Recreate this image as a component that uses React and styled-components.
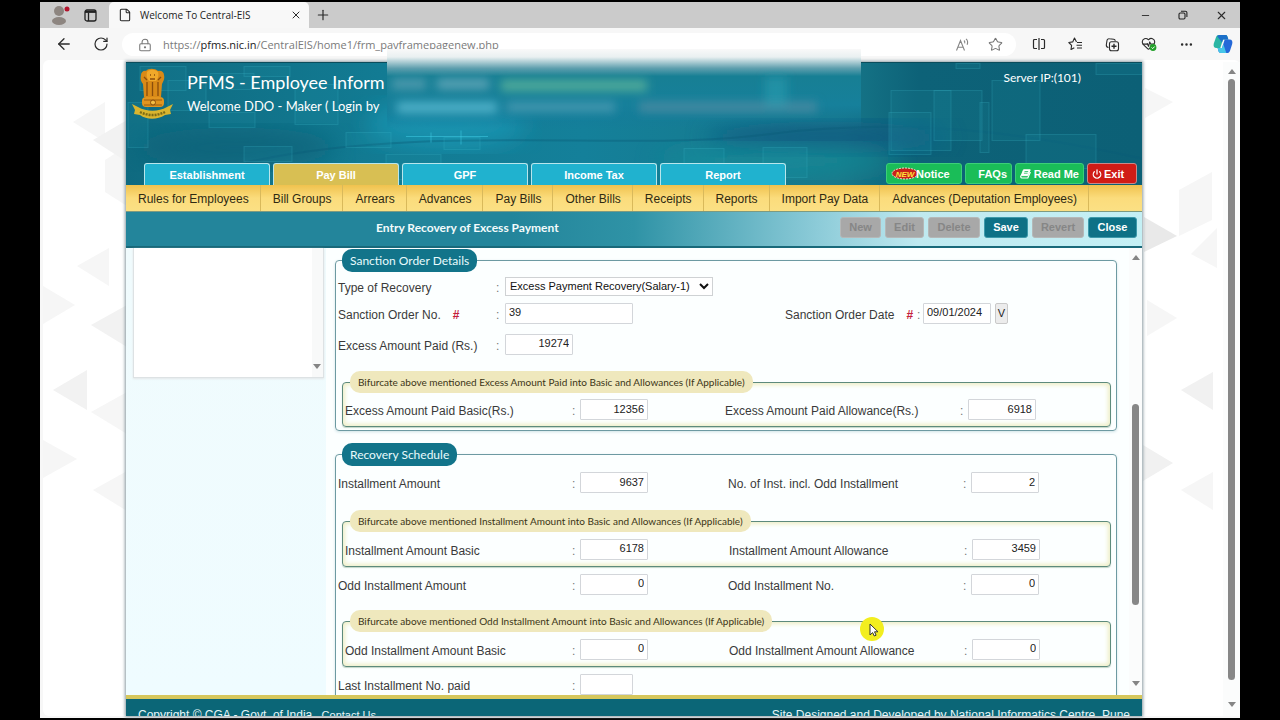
import React from "react";
import styled, { createGlobalStyle } from "styled-components";
import { ArrowLeft, RotateCw, LockKeyhole, Star, File, X, Plus, Minus, HeartPulse, Ellipsis, Power } from "lucide-react";

const GlobalStyle = createGlobalStyle`
  * {
    box-sizing: border-box;
  }
  body {
    margin: 0;
    background: #000;
    font-family: "Liberation Sans", Arial, sans-serif;
    font-size: 12px;
    color: #3a3a3a;
  }
  a {
    text-decoration: none;
    color: inherit;
  }
  button {
    font-family: inherit;
    cursor: pointer;
  }
`

const Screen = styled.div`
  height: 100vh;
  padding: 2px 40px;
  display: flex;
  flex-direction: column;
`

const BrowserWindow = styled.div`
  position: relative;
  flex: 1;
  min-height: 0;
  display: flex;
  flex-direction: column;
  background: #f7f7f7;
  padding-bottom: 2px;
`

const TabStrip = styled.div`
  height: 26px;
  display: flex;
  align-items: stretch;
  background: #cbcbcb;
`

const IconButton = styled.button`
  width: ${(props) => props.$width || 37}px;
  padding: 0;
  border: 0;
  background: none;
  color: ${(props) => props.$color || "#2b2b2b"};
  display: flex;
  justify-content: center;
  align-items: center;
`

const BrowserTab = styled.div`
  width: 200px;
  padding: 0 6px 0 9px;
  display: flex;
  align-items: center;
  gap: 8px;
  background: #f8f8f8;
  color: #222;
  font-family: "Open Sans", sans-serif;
  font-size: 10px;
  border-radius: 5px 5px 0 0;
`

const TabTitle = styled.span`
  flex: 1;
`

const Spacer = styled.div`
  flex: 1;
`

const Toolbar = styled.div`
  height: 32px;
  padding-left: 5px;
  display: flex;
  align-items: stretch;
`

const AddressBar = styled.div`
  flex: 1;
  margin: 5px 4px 4px 3px;
  padding-left: 4px;
  border-radius: 12px;
  background: #fff;
  display: flex;
  align-items: stretch;
`

const AddressText = styled.a`
  flex: 1;
  display: flex;
  align-items: center;
  font-family: "Open Sans", sans-serif;
  font-size: 11px;
  color: #7a7a7a;

  b {
    font-weight: 400;
    color: #1b1b1b;
  }
`

const Viewport = styled.div`
  flex: 1;
  min-height: 0;
  margin-left: 3px;
  padding: 2px 0 0 2px;
  display: flex;
  position: relative;
  background: #fff;
  border-radius: 6px;
`

const Backdrop = styled.svg`
  position: absolute;
  top: 0;
  ${(props) => props.$side}: ${(props) => (props.$side === "left" ? 0 : 15)}px;
`

const PageArea = styled.div`
  flex: 1;
  min-width: 0;
  display: flex;
  justify-content: center;
`

const Page = styled.div`
  position: relative;
  width: 100%;
  max-width: 1016px;
  display: flex;
  flex-direction: column;
  box-shadow: 0 0 3px 1px #8a9aa0;
  background: #f4feff;
`

const Scrollbar = styled.div`
  width: ${(props) => props.$width}px;
  padding: 7px 0 9px;
  display: flex;
  flex-direction: column;
  align-items: center;
  background: #fbfcfc;
`

const Track = styled.div`
  flex: 1;
  width: 7px;
  margin: 5px 0;
  display: flex;
  flex-direction: column;
`

const TrackGap = styled.div`
  flex: ${(props) => props.$size};
`

const Thumb = styled.div`
  flex: ${(props) => props.$size};
  border-radius: 4px;
  background: #878787;
`

const Arrow = styled.div`
  border-left: 4px solid transparent;
  border-right: 4px solid transparent;
  border-${(props) => (props.$up ? "bottom" : "top")}: 5px solid #858585;
`

const Header = styled.header`
  position: relative;
  height: 123px;
  display: flex;
  flex-direction: column;
  justify-content: space-between;
  border-top: 1px solid #0b4d5c;
  background: linear-gradient(90deg, #0f6a80 0%, #127b93 25%, #14809a 45%, #17788a 70%, #0d6278 78%, #0c6076 100%);
`

const HeaderArt = styled.svg`
  position: absolute;
  top: 0;
  left: 0;
  width: 100%;
  height: 100%;
`

const HeaderTop = styled.div`
  position: relative;
  display: flex;
  padding: 5px 61px 0 5px;
  color: #fff;
  font-family: Lato, sans-serif;
`

const Titles = styled.div`
  flex: 1;
  padding: 3px 0 0 13px;
`

const AppTitle = styled.h1`
  margin: 0;
  font-size: 18px;
  line-height: 22px;
  font-weight: 400;
  white-space: nowrap;
`

const Welcome = styled.p`
  margin: 3px 0 0;
  font-size: 13px;
  line-height: 20px;
`

const Server = styled.span`
  padding-top: 1px;
  font-size: 12px;
  line-height: 18px;
`

const Redacted = styled.svg`
  position: absolute;
  top: -14px;
  left: 261px;
`

const HeaderTabs = styled.nav`
  position: relative;
  display: flex;
  align-items: flex-end;
  gap: 3px;
  padding: 0 5px 0 18px;
`

const HeaderTab = styled.a`
  width: 126px;
  height: 22px;
  display: flex;
  justify-content: center;
  align-items: center;
  color: #fff;
  font-size: 11px;
  font-weight: 700;
  border: 1px solid #b8e6ec;
  border-bottom: 0;
  border-radius: 3px 3px 0 0;
  background: ${(props) => (props.$active ? "#d8bf53" : "#20b2cf")};
`

const QuickButton = styled.button`
  width: ${(props) => props.$width}px;
  height: 21px;
  margin-bottom: 1px;
  padding: 0 4px;
  display: flex;
  align-items: center;
  justify-content: ${(props) => props.$align || "flex-end"};
  gap: 2px;
  color: #fff;
  font-size: 11px;
  font-weight: 700;
  white-space: nowrap;
  border: 1px solid ${(props) => (props.$red ? "#c9898a" : "#3ccf78")};
  border-radius: 3px;
  background: ${(props) => (props.$red ? "#d01c16" : "#1abd58")};
`

const Badge = styled.svg`
  flex-shrink: 0;
  margin-right: -5px;
`

const MenuBar = styled.nav`
  height: 27px;
  display: flex;
  border-bottom: 1px solid #7d9a80;
  background: linear-gradient(#f0c24e, #fbdc7c 50%, #fbe084);
  color: #2f2a12;
`

const MenuItem = styled.a`
  padding: 1px 11px 0 12px;
  display: flex;
  align-items: center;
  white-space: nowrap;
  border-right: 1px solid #d9b95b;
`

const TitleBar = styled.div`
  height: 36px;
  padding: 0 5px 4px 250px;
  display: flex;
  align-items: center;
  gap: 4px;
  border-bottom: 2px solid #19697a;
  background: linear-gradient(90deg, #23859b 0%, #23859b 38%, #2f93a6 50%, #8ccbd8 68%, #bfe9f0 78%, #c4f0f5 100%);
`

const ScreenTitle = styled.h2`
  flex: 1;
  margin: 0;
  color: #f3fbfc;
  font-family: Lato, sans-serif;
  font-size: 12px;
  font-weight: 700;
`

const ActionButton = styled.button`
  width: ${(props) => props.$width}px;
  height: 21px;
  padding: 0;
  font-size: 11px;
  font-weight: 700;
  color: #fff;
  border: 1px solid #3d9aab;
  border-radius: 3px;
  background: #0e7186;

  &:disabled {
    color: #868686;
    border-color: #b5b8b8;
    background: #a8a8a8;
  }
`

const Body = styled.div`
  flex: 1;
  min-height: 0;
  display: flex;
`

const Sidebar = styled.aside`
  width: 200px;
  padding: 0 2px 0 7px;
  background: linear-gradient(#f0fbfd, #effcff);
`

const SideList = styled.div`
  height: 130px;
  padding-bottom: 8px;
  display: flex;
  justify-content: flex-end;
  align-items: flex-end;
  border: 1px solid #dde2e4;
  border-top: 0;
  background: linear-gradient(90deg, #fff 94%, #f8f9f9 94%);
  box-shadow: 0 1px 2px #e3e6e8;

  ${Arrow} {
    margin-right: 2px;
  }
`

const Content = styled.main`
  flex: 1;
  min-width: 0;
  padding: 1px 12px 0 9px;
  overflow: hidden;
  background: #fcffff;
`

const Section = styled.fieldset`
  min-width: 0;
  margin: 0 0 12px;
  padding: 0 2px 3px;
  border: 1px solid #6d9aa2;
  border-radius: 4px;
  box-shadow: 0 1px 3px #cfe3e6;
`

const SectionTitle = styled.legend`
  height: 23px;
  margin-left: 4px;
  padding: 0 8px;
  line-height: 23px;
  color: #e9fbfd;
  font-family: Lato, sans-serif;
  font-size: 12px;
  border-radius: 10px;
  background: #12748a;
`

const SubSection = styled.fieldset`
  min-width: 0;
  margin: ${(props) => props.$top}px 3px 0 4px;
  padding: 0 2px;
  border: 1px solid #5d8a7c;
  border-radius: 4px;
  box-shadow: inset 0 0 4px 2px #eeeec6, 0 1px 1px #c3d6c8;
`

const SubTitle = styled.legend`
  height: 22px;
  margin-left: 5px;
  padding: 0 8px;
  line-height: 22px;
  color: #3b3516;
  font-family: Lato, sans-serif;
  font-size: 10px;
  border-radius: 10px;
  background: #efe8bd;
`

const Row = styled.div`
  height: ${(props) => props.$height}px;
  display: grid;
  grid-template-columns: ${(props) => props.$cols};
  align-items: center;
`

const Label = styled.label`
  padding-top: 3px;
  white-space: nowrap;
`

const Required = styled.span`
  margin-left: 12px;
  color: #c4203a;
  font-weight: 700;
`

const Colon = styled.span`
  padding-top: 3px;
  color: #777;
`

const Value = styled.div`
  display: flex;
  gap: 4px;
`

const TextInput = styled.input`
  width: ${(props) => props.$width || 68}px;
  height: 21px;
  padding: 0 3px 2px;
  text-align: ${(props) => props.$align || "right"};
  font-family: inherit;
  font-size: 11px;
  color: #222;
  border: 1px solid #d3d6da;
  border-radius: 1px;
  background: #fff;
`

const Select = styled.select`
  width: 208px;
  height: 19px;
  padding: 0;
  font-family: inherit;
  font-size: 11px;
  color: #111;
  border: 1px solid #cfd2d4;
  background: #fff;
`

const PickButton = styled.button`
  width: 13px;
  height: 21px;
  padding: 0;
  font-size: 11px;
  color: #222;
  border: 1px solid #c9c9c9;
  border-radius: 2px;
  background: #ececec;
`

const Footer = styled.footer`
  height: 21px;
  padding: 8px 12px 0;
  display: flex;
  justify-content: space-between;
  overflow: hidden;
  border-top: 4px solid #d6c75c;
  background: #0b6677;
  color: #e6f6f8;
  font-size: 12px;
  line-height: 16px;
  white-space: nowrap;

  a {
    margin-left: 6px;
    font-size: 11px;
  }
`

const Pointer = styled.svg`
  position: absolute;
  top: 614px;
  left: 819px;
`

const AvatarIcon = () => (
  <svg width="24" height="24" viewBox="0 0 24 24">
    <circle cx="12" cy="8" r="5" fill="#8d8580" />
    <ellipse cx="12" cy="18" rx="7" ry="4" fill="#8d8580" />
    <circle cx="20" cy="6" r="2.500" fill="#b3122c" />
  </svg>
)

const WorkspaceIcon = () => (
  <svg width="13" height="13" viewBox="0 0 13 13" fill="none" stroke="#222" strokeWidth="1.3">
    <rect x="1" y="1" width="11" height="11" rx="2" />
    <path d="M1 2.800h11" strokeWidth="2.200" />
    <path d="M4.500 3.500V12" />
  </svg>
)

const RestoreIcon = () => (
  <svg width="10" height="10" viewBox="0 0 10 10" fill="none" stroke="#222" strokeWidth="1.1">
    <rect x="1" y="3" width="6" height="6" rx="1.2" />
    <path d="M3 1.2h4.3A1.6 1.6 0 0 1 8.9 2.8V7" />
  </svg>
)

const ReadAloudIcon = () => (
  <svg width="15" height="14" viewBox="0 0 15 14" fill="none" stroke="#858585" strokeWidth="1.1">
    <path d="M1.500 12.500 5.500 2.500l4 10M2.900 9.300h5.300M9 2.500c.8.700 1 1.700.7 2.800M11 .8c1.700 1.500 2 3.700 1.100 6" />
  </svg>
)

const SplitIcon = () => (
  <svg width="14" height="14" viewBox="0 0 14 14" fill="none" stroke="#2b2b2b" strokeWidth="1.2">
    <path d="M5 2.500H2.500a1 1 0 0 0-1 1v7a1 1 0 0 0 1 1H5M9 2.500h2.500a1 1 0 0 1 1 1v7a1 1 0 0 1-1 1H9M7 1v12" />
  </svg>
)

const FavoritesIcon = () => (
  <svg width="15" height="14" viewBox="0 0 15 14" fill="none" stroke="#2b2b2b" strokeWidth="1.1" strokeLinejoin="round">
    <path d="M8.500 5 6.500 1 4.700 4.900.8 5.500l2.800 2.800L3 12.500l3.300-1.800M9 5.500h5M8.500 8.300H14M9 11h5" />
  </svg>
)

const CollectionsIcon = () => (
  <svg width="15" height="15" viewBox="0 0 15 15" fill="none" stroke="#2b2b2b" strokeWidth="1.1">
    <path d="M3.500 10.500A2.500 2.500 0 0 1 1.300 8L2 3.500a2 2 0 0 1 2.300-1.700l4.400.5a2 2 0 0 1 1.600 1.500" />
    <rect x="4.500" y="4.800" width="9" height="9" rx="2" />
    <path d="M9 6.800v5M6.500 9.300h5" strokeWidth="1.400" />
  </svg>
)

const HealthIcon = () => (
  <svg width="17" height="16" viewBox="0 0 17 16">
    <HeartPulse x="0" y="0" width="15" height="15" strokeWidth="1.8" color="#2b2b2b" />
    <circle cx="12" cy="11.500" r="3.400" fill="#23a02b" />
    <path d="m10.500 11.500 1.200 1.100 2-2.100" fill="none" stroke="#fff" />
  </svg>
)

const CopilotIcon = () => (
  <svg width="20" height="20" viewBox="0 0 20 20">
    <path d="M6 1h6.500a2 2 0 0 1 1.900 1.400l1 3.100H10L7.300 14H3.500C1 14 .1 12 .8 9.500L3 3.300C3.500 1.800 4.500 1 6 1Z" fill="#2bb6a4" />
    <path d="M6 1h6.500a2 2 0 0 1 1.900 1.400l1 3.100H10L9 8.500 4 2Z" fill="#1d70c9" />
    <path d="M14 19H7.500a2 2 0 0 1-1.900-1.400l-1-3.600H9l2.700-8.500h4.800c2.500 0 3.400 2 2.700 4.500L17 16.700c-.5 1.500-1.500 2.300-3 2.300Z" fill="#2468d8" />
    <path d="M4.600 14H9l1.300-4 3 9H7.500a2 2 0 0 1-1.900-1.400Z" fill="#46c6e8" />
  </svg>
)

const BookIcon = () => (
  <svg width="11" height="10" viewBox="0 0 11 10" fill="none" stroke="#fff" strokeLinejoin="round">
    <path d="M3.500.8h6.700L7.800 6.600H1.200Z" fill="#fff" />
    <path d="M1.200 6.600C.3 7.600.7 9 2 9h5.800l2.600-6" strokeWidth="1.200" />
    <path d="M4.500 2.500h3.700M3.900 4.200h3.700" stroke="#1abd58" strokeWidth=".8" />
  </svg>
)

const Emblem = () => (
  <svg width="43" height="53" viewBox="0 0 43 53">
    <path d="M10 7c0-3 3-5 5-4 2-3 9-3 12 0 3-1 6 1 6 4 1 4-1 7-2 9l-1 13H13l-1-13c-2-2-3-5-2-9Z" fill="#d98a17" />
    <path d="M16 4c2-3 8-3 11 0 1 3 0 7-2 9h-7c-2-2-3-6-2-9Z" fill="#f0a92a" />
    <path d="M16 14v14M21.500 14v14M27 14v14M13 9l3 3M30 9l-3 3M19 7h1M23 7h1M19 11h5" stroke="#8a4d0c" strokeWidth="1.300" fill="none" />
    <rect x="11" y="29" width="22" height="10" rx="4" fill="#e2951f" />
    <path d="M13 32h18M13 37h18" stroke="#9c5d10" />
    <circle cx="22" cy="34.500" r="2.500" fill="#f4bd45" stroke="#8a4d0c" />
    <path d="M1 36l6 3c9 5 20 5 29 0l6-3-3 6 1 4-6 1c-8 5-18 5-25 0l-6-1 1-4Z" fill="#d9b52e" />
    <path d="M9 44c8 4 17 4 25 0" fill="none" stroke="#7d6b16" strokeWidth="2.500" strokeDasharray="2 1" />
  </svg>
)

const NewBadge = () => (
  <Badge width="28" height="13" viewBox="0 0 28 13">
    <ellipse cx="14" cy="6.500" rx="13" ry="5.500" fill="#c8201a" stroke="#f7d9d0" strokeDasharray="2 1" />
    <text x="14" y="9.500" textAnchor="middle" fontSize="8" fontWeight="700" fontStyle="italic" fill="#ffe23a">NEW</text>
  </Badge>
)

// faint outlined squares over the teal banner: x, y, width, height
const squares = [
  [2, 40, 20, 45], [14, 4, 46, 24], [42, 18, 38, 30], [83, 50, 46, 15], [84, 11, 44, 16],
  [118, 4, 46, 10], [169, 22, 43, 40], [220, 70, 45, 15], [118, 84, 48, 15], [260, 92, 55, 25],
  [318, 75, 36, 12], [558, 86, 40, 20], [637, 85, 44, 30], [765, 28, 60, 60], [763, 50, 42, 42],
  [854, 40, 9, 50], [808, 28, 48, 50], [866, 18, 48, 60], [830, 1, 24, 5], [970, 1, 46, 11], [900, 72, 70, 34],
]

const Banner = () => (
  <HeaderArt preserveAspectRatio="xMidYMid slice" viewBox="0 0 1016 123">
    <defs>
      <filter id="soft"><feGaussianBlur stdDeviation="12" /></filter>
    </defs>
    <ellipse cx="320" cy="62" rx="80" ry="24" fill="#1fa0bf" opacity="0.6" filter="url(#soft)" />
    <ellipse cx="700" cy="75" rx="120" ry="16" fill="#0b5580" opacity="0.7" filter="url(#soft)" />
    <ellipse cx="650" cy="98" rx="120" ry="16" fill="#178c98" opacity="0.7" filter="url(#soft)" />
    <ellipse cx="110" cy="85" rx="100" ry="20" fill="#0d6077" opacity="0.7" filter="url(#soft)" />
    <path d="M120 100C300 60 500 90 640 72S900 70 1016 96" fill="none" stroke="#0b5c78" opacity="0.4" strokeWidth="2" />
    {squares.map(([x, y, w, h]) => (
      <rect key={`${x}-${y}`} x={x} y={y} width={w} height={h} fill="#26a6bd" fillOpacity="0.1" stroke="#3fc0d2" strokeOpacity="0.22" />
    ))}
    <path d="M280 74h82M305 70v10M335 68v14" fill="none" stroke="#42d0e8" opacity="0.5" />
  </HeaderArt>
)

const HiddenDetails = () => (
  <Redacted width="474" height="80" viewBox="0 0 474 80">
    <defs>
      <linearGradient id="fade" x1="0" y1="0" x2="0" y2="1">
        <stop offset="0" stopColor="#f9f9f9" />
        <stop offset="0.1" stopColor="#e9f0f1" />
        <stop offset="0.24" stopColor="#5f9fae" />
        <stop offset="0.34" stopColor="#177f94" />
        <stop offset="0.7" stopColor="#16809b" />
        <stop offset="1" stopColor="#14789a" stopOpacity="0" />
      </linearGradient>
      <filter id="smudge" x="-20%" y="-100%" width="140%" height="300%"><feGaussianBlur stdDeviation="5" /></filter>
    </defs>
    <rect width="474" height="80" fill="url(#fade)" />
    <g filter="url(#smudge)">
      <rect x="5" y="30" width="34" height="10" fill="#4d9aad" />
      <rect x="50" y="30" width="52" height="10" fill="#5aa3b5" />
      <rect x="114" y="31" width="146" height="11" fill="#4faa9a" />
      <rect x="10" y="53" width="100" height="11" fill="#4fb0c8" />
      <rect x="120" y="53" width="108" height="10" fill="#4396ae" />
      <rect x="252" y="53" width="178" height="10" fill="#4589a0" />
      <rect x="378" y="28" width="22" height="30" fill="#2ba2b4" opacity="0.5" />
    </g>
  </Redacted>
)

const Shapes = ({ side }) => (
  <Backdrop $side={side} width="84" height="656" viewBox="0 0 84 656">
    {side === "left" ? (
      <g fill="#f6f6f6">
        <path d="M30 62 62 42v40ZM62 100l22-14v60l-22-14Z" />
        <path d="M50 80 84 60v42Z" fill="#f2f2f2" />
        <path d="M0 226l32 19-32 19ZM34 206l32-18v38Z" />
        <path d="M48 265l36-20v42ZM10 330l34-20v40Z" fill="#f2f2f2" />
        <path d="M48 352l36-20v42ZM0 380l34 19-34 19ZM50 430l34-19v40Z" />
      </g>
    ) : (
      <g fill="#f6f6f6">
        <path d="M4 28l28 14-28 16ZM38 130l33-18v48l-33 16Z" />
        <path d="M3 157l33 19-33 16Z" fill="#e9e9e9" />
        <path d="M76 168v40l-26-14ZM6 240l30 18-30 18Z" />
        <path d="M2 385l30 18-30 18ZM40 330l32-18v38Z" fill="#f1f1f1" />
        <path d="M40 430l32-18v38Z" />
      </g>
    )}
  </Backdrop>
)

const ScrollColumn = ({ width, before, size, after }) => (
  <Scrollbar $width={width}>
    <Arrow $up />
    <Track>
      <TrackGap $size={before} />
      <Thumb $size={size} />
      <TrackGap $size={after} />
    </Track>
    <Arrow />
  </Scrollbar>
)

const Field = ({ id, label, value, width }) => (
  <>
    <Label htmlFor={id}>{label}</Label>
    <Colon>:</Colon>
    <Value>
      <TextInput id={id} $width={width} defaultValue={value} />
    </Value>
  </>
)

const menuItems = [
  "Rules for Employees", "Bill Groups", "Arrears", "Advances", "Pay Bills", "Other Bills",
  "Receipts", "Reports", "Import Pay Data", "Advances (Deputation Employees)",
]

const headerTabs = ["Establishment", "Pay Bill", "GPF", "Income Tax", "Report"]

const actions = [
  { name: "New", width: 41, disabled: true },
  { name: "Edit", width: 39, disabled: true },
  { name: "Delete", width: 52, disabled: true },
  { name: "Save", width: 44 },
  { name: "Revert", width: 52, disabled: true },
  { name: "Close", width: 49 },
]

const orderCols = "158px 9px 280px 132px 6px 1fr"
const scheduleCols = "234px 8px 148px 235px 8px 1fr"
const splitCols = "227px 8px 149px 235px 8px 1fr"
const paidCols = "227px 8px 145px 235px 8px 1fr"

export default function App() {
  return (
    <Screen>
      <GlobalStyle />
      <BrowserWindow>
        <TabStrip>
          <IconButton aria-label="Profile"><AvatarIcon /></IconButton>
          <IconButton $width={26} aria-label="Workspaces"><WorkspaceIcon /></IconButton>
          <TrackGap $size="0 0 6px" />
          <BrowserTab>
            <File size={14} strokeWidth={1.8} />
            <TabTitle>Welcome To Central-EIS</TabTitle>
            <IconButton $width={14} aria-label="Close tab"><X size={12} /></IconButton>
          </BrowserTab>
          <IconButton $width={28} aria-label="New tab"><Plus size={16} strokeWidth={1.8} /></IconButton>
          <Spacer />
          <IconButton $width={38} aria-label="Minimize"><Minus size={11} /></IconButton>
          <IconButton $width={38} aria-label="Restore"><RestoreIcon /></IconButton>
          <IconButton $width={38} aria-label="Close"><X size={13} strokeWidth={2} /></IconButton>
        </TabStrip>

        <Toolbar>
          <IconButton aria-label="Back"><ArrowLeft size={18} strokeWidth={1.7} /></IconButton>
          <IconButton aria-label="Refresh"><RotateCw size={16} strokeWidth={1.8} /></IconButton>
          <AddressBar>
            <IconButton $color="#777" aria-label="Site information"><LockKeyhole size={14} strokeWidth={1.8} /></IconButton>
            <AddressText href="#address">https://<b>pfms.nic.in</b>/CentralEIS/home1/frm_payframepagenew.php</AddressText>
            <IconButton $width={34} aria-label="Read aloud"><ReadAloudIcon /></IconButton>
            <IconButton $width={33} $color="#777" aria-label="Favorite"><Star size={15} strokeWidth={1.7} /></IconButton>
            <TrackGap $size="0 0 4px" />
          </AddressBar>
          <IconButton aria-label="Split screen"><SplitIcon /></IconButton>
          <IconButton aria-label="Favorites"><FavoritesIcon /></IconButton>
          <IconButton aria-label="Collections"><CollectionsIcon /></IconButton>
          <IconButton aria-label="Browser essentials"><HealthIcon /></IconButton>
          <IconButton aria-label="Settings"><Ellipsis size={15} /></IconButton>
          <IconButton $width={35} aria-label="Copilot"><CopilotIcon /></IconButton>
        </Toolbar>

        <Viewport>
          <Shapes side="left" />
          <Shapes side="right" />
          <PageArea>
            <Page>
              <Header>
                <Banner />
                <HeaderTop>
                  <Emblem />
                  <Titles>
                    <AppTitle>PFMS - Employee Inform</AppTitle>
                    <Welcome>Welcome DDO - Maker ( Login by</Welcome>
                  </Titles>
                  <Server>Server IP:(101)</Server>
                </HeaderTop>
                <HiddenDetails />
                <HeaderTabs>
                  {headerTabs.map((tab) => (
                    <HeaderTab key={tab} href="#tab" $active={tab === "Pay Bill"}>{tab}</HeaderTab>
                  ))}
                  <Spacer />
                  <QuickButton $width={76} $align="flex-start"><NewBadge />Notice</QuickButton>
                  <QuickButton $width={47}>FAQs</QuickButton>
                  <QuickButton $width={69} $align="space-between"><BookIcon />Read Me</QuickButton>
                  <QuickButton $width={50} $red $align="flex-start"><Power size={10} strokeWidth={3} />Exit</QuickButton>
                </HeaderTabs>
              </Header>

              <MenuBar>
                {menuItems.map((item) => (
                  <MenuItem key={item} href="#menu">{item}</MenuItem>
                ))}
              </MenuBar>

              <TitleBar>
                <ScreenTitle>Entry Recovery of Excess Payment</ScreenTitle>
                {actions.map((action) => (
                  <ActionButton key={action.name} $width={action.width} disabled={action.disabled}>{action.name}</ActionButton>
                ))}
              </TitleBar>

              <Body>
                <Sidebar>
                  <SideList><Arrow /></SideList>
                </Sidebar>
                <Content>
                  <Section>
                    <SectionTitle>Sanction Order Details</SectionTitle>
                    <Row $cols={orderCols} $height={28}>
                      <Label htmlFor="type">Type of Recovery</Label>
                      <Colon>:</Colon>
                      <Select id="type">
                        <option>Excess Payment Recovery(Salary-1)</option>
                      </Select>
                    </Row>
                    <Row $cols={orderCols} $height={26}>
                      <Label htmlFor="order">Sanction Order No.<Required>#</Required></Label>
                      <Colon>:</Colon>
                      <Value><TextInput id="order" $width={128} $align="left" defaultValue="39" /></Value>
                      <Label htmlFor="date">Sanction Order Date<Required>#</Required></Label>
                      <Colon>:</Colon>
                      <Value>
                        <TextInput id="date" $align="left" defaultValue="09/01/2024" />
                        <PickButton>V</PickButton>
                      </Value>
                    </Row>
                    <Row $cols={orderCols} $height={36}>
                      <Field id="paid" label="Excess Amount Paid (Rs.)" value="19274" />
                    </Row>
                    <SubSection $top={9}>
                      <SubTitle>Bifurcate above mentioned Excess Amount Paid into Basic and Allowances (If Applicable)</SubTitle>
                      <Row $cols={paidCols} $height={33}>
                        <Field id="paidBasic" label="Excess Amount Paid Basic(Rs.)" value="12356" />
                        <Field id="paidAllowance" label="Excess Amount Paid Allowance(Rs.)" value="6918" />
                      </Row>
                    </SubSection>
                  </Section>

                  <Section>
                    <SectionTitle>Recovery Schedule</SectionTitle>
                    <Row $cols={scheduleCols} $height={33}>
                      <Field id="amount" label="Installment Amount" value="9637" />
                      <Field id="count" label="No. of Inst. incl. Odd Installment" value="2" />
                    </Row>
                    <SubSection $top={11}>
                      <SubTitle>Bifurcate above mentioned Installment Amount into Basic and Allowances (If Applicable)</SubTitle>
                      <Row $cols={splitCols} $height={34}>
                        <Field id="basic" label="Installment Amount Basic" value="6178" />
                        <Field id="allowance" label="Installment Amount Allowance" value="3459" />
                      </Row>
                    </SubSection>
                    <Row $cols={scheduleCols} $height={34}>
                      <Field id="odd" label="Odd Installment Amount" value="0" />
                      <Field id="oddNo" label="Odd Installment No." value="0" />
                    </Row>
                    <SubSection $top={9}>
                      <SubTitle>Bifurcate above mentioned Odd Installment Amount into Basic and Allowances (If Applicable)</SubTitle>
                      <Row $cols={splitCols} $height={34}>
                        <Field id="oddBasic" label="Odd Installment Amount Basic" value="0" />
                        <Field id="oddAllowance" label="Odd Installment Amount Allowance" value="0" />
                      </Row>
                    </SubSection>
                    <Row $cols={scheduleCols} $height={34}>
                      <Field id="last" label="Last Installment No. paid" value="" width={53} />
                    </Row>
                  </Section>
                </Content>
                <ScrollColumn width={13} before={141} size={204} after={72} />
              </Body>

              <Footer>
                <span>Copyright © CGA - Govt. of India <a href="#contact">Contact Us</a></span>
                <span>Site Designed and Developed by National Informatics Centre, Pune</span>
              </Footer>
            </Page>
          </PageArea>
          <ScrollColumn width={17} before={0} size={600} after={17} />
        </Viewport>

        <Pointer width="26" height="26" viewBox="0 0 26 26">
          <circle cx="13" cy="13" r="12" fill="#f2ee1f" />
          <path d="M11 8v11l2.600-2.400L15.300 20l1.800-.8-1.600-3.400H19Z" fill="#fff" stroke="#333" />
        </Pointer>
      </BrowserWindow>
    </Screen>
  )
}
